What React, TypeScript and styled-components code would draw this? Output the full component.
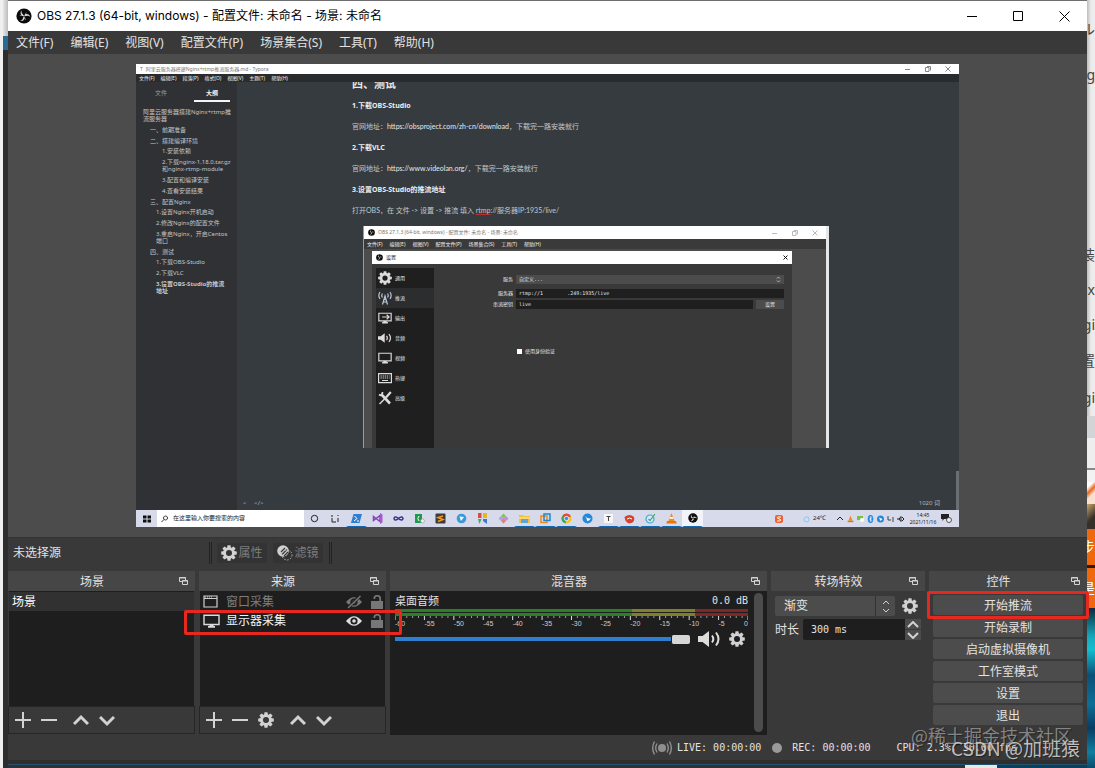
import React from 'react';
import styled, { createGlobalStyle, css } from 'styled-components';

const ui = `"Noto Sans", "Noto Sans CJK SC", sans-serif`;
const mono = `"DejaVu Sans Mono", "Noto Sans CJK SC", monospace`;

const c = {
  base: '#3a393a',
  panel: '#4c4c4c',
  head: '#464646',
  dark: '#1f1e1f',
  text: '#e2e2e2',
  dim: '#7d7d7d',
  icon: '#d2d2d2',
  red: '#e8281f',
};

const GlobalStyle = createGlobalStyle`
  *, *::before, *::after { box-sizing: border-box; }
  body { margin: 0; background: #2f2f2f; font-family: ${ui}; font-size: 12px; line-height: 16px; color: ${c.text}; }
  button, input, select { font: inherit; color: inherit; margin: 0; padding: 0; border: 0; background: none; border-radius: 0; outline: 0; }
  ul, h2, h3, p { margin: 0; padding: 0; list-style: none; font-weight: normal; font-size: inherit; }
  a { color: inherit; text-decoration: none; }
  svg { display: block; flex: none; }
`;

/* ---------- desktop behind the window ---------- */

const Desktop = styled.div`
  display: grid;
  grid-template-columns: 8px minmax(0, 1fr) 8px;
  grid-template-rows: minmax(0, 1fr) 4px;
  min-height: 100vh;
  overflow: hidden;
`;

const LeftEdge = styled.div`
  grid-area: 1 / 1 / 3 / 2;
  display: flex;
  flex-direction: column;
  border-left: 3px solid #f0f0f0;
  background: #2d2d2d;
  overflow: hidden;
`;

const Slice = styled.div<{ $h: number; $bg: string }>`
  flex: none;
  height: ${(p) => p.$h}px;
  background: ${(p) => p.$bg};
`;

const RightEdge = styled.div`
  grid-area: 1 / 3 / 3 / 4;
  display: flex;
  flex-direction: column;
  overflow: hidden;
`;

const Sea = styled.div`
  flex: 1;
  background: linear-gradient(#0a2a3e, #17a9bd 18%, #12bfd0 26%, #0b4f78 42%, #0d6f96 60%, #0a3c62 75%, #0e7fa0 90%, #0a4a6c);
`;

const EdgeText = styled.div<{ $h: number; $color?: string; $bg?: string }>`
  flex: none;
  display: flex;
  align-items: center;
  justify-content: flex-end;
  height: ${(p) => p.$h}px;
  overflow: hidden;
  font-size: 14px;
  white-space: nowrap;
  color: ${(p) => p.$color || '#444'};
  background: ${(p) => p.$bg || 'linear-gradient(90deg, #bdbdbd, #ececec 4px)'};
`;

const BottomEdge = styled.div`
  grid-area: 2 / 2;
  display: flex;
  background: #25303a;
  border-top: 1px solid #24536f;
  overflow: hidden;
`;

const BottomFill = styled.div<{ $bg: string; $w?: number }>`
  flex: ${(p) => (p.$w ? `0 0 ${p.$w}px` : '1')};
  background: ${(p) => p.$bg};
`;

/* ---------- window frame ---------- */

const Window = styled.main`
  grid-area: 1 / 2;
  display: flex;
  flex-direction: column;
  min-width: 0;
  background: ${c.base};
  border-top: 1px solid #6d6d6d;
  border-bottom: 4px solid #2f2f2f;
`;

const TitleBar = styled.header`
  display: flex;
  align-items: center;
  height: 30px;
  padding-left: 8px;
  gap: 5px;
  background: #fff;
  color: #000;
`;

const TitleText = styled.h1`
  flex: 1;
  margin: 0;
  font-family: Inter, "Noto Sans CJK SC", sans-serif;
  font-size: 12px;
  font-weight: 400;
  white-space: nowrap;
`;

const Caption = styled.div`
  display: flex;
  align-self: stretch;
`;

const CaptionButton = styled.button`
  display: flex;
  align-items: center;
  justify-content: center;
  width: 46px;
`;

const MenuBar = styled.nav`
  display: flex;
  align-items: center;
  gap: 1px;
  height: 23px;
  background: #393939;
`;

const MenuItem = styled.button`
  padding: 0 8px;
  white-space: nowrap;
`;

const Preview = styled.section`
  flex: 1;
  display: flex;
  align-items: center;
  justify-content: center;
  min-height: 483px;
  padding: 10px;
  background: ${c.panel};
`;

/* ---------- captured screen ---------- */

const Capture = styled.div`
  display: flex;
  flex-direction: column;
  width: 100%;
  max-width: 823px;
  height: 463px;
  background: #363b40;
  font-size: 6px;
  line-height: 7px;
  overflow: hidden;
  white-space: nowrap;
`;

const TinyTitle = styled.div<{ $h: number; $strong?: boolean }>`
  flex: none;
  display: flex;
  align-items: center;
  gap: 3px;
  height: ${(p) => p.$h}px;
  padding: 0 4px;
  background: #fff;
  font-size: 5px;
  color: ${(p) => (p.$strong ? '#111' : '#777')};
`;

const TinyGrow = styled.span`
  flex: 1;
`;

const TinyCaption = styled.div`
  display: flex;
  gap: 14px;
  padding-right: 4px;
`;

const TinyMenu = styled.div<{ $h: number; $bg: string; $gap: number }>`
  flex: none;
  display: flex;
  align-items: center;
  gap: ${(p) => p.$gap}px;
  height: ${(p) => p.$h}px;
  padding: 0 3px;
  background: ${(p) => p.$bg};
  font-size: 5px;
  color: #f0f0f0;
`;

const Typora = styled.div`
  flex: 1;
  display: flex;
  min-height: 0;
`;

const Outline = styled.aside`
  flex: none;
  width: 101px;
  padding: 0 7px;
  background: #2f3134;
  color: #c4c6c8;
`;

const OutlineTabs = styled.div`
  display: flex;
  justify-content: space-between;
  height: 20px;
  margin-bottom: 7px;
`;

const OutlineTab = styled.div<{ $on?: boolean }>`
  display: flex;
  align-items: center;
  justify-content: center;
  width: 36px;
  padding-top: 4px;
  border-bottom: 2px solid ${(p) => (p.$on ? '#f4f4f4' : 'transparent')};
  font-weight: ${(p) => (p.$on ? 700 : 400)};
  color: ${(p) => (p.$on ? '#f4f4f4' : '#9a9c9e')};
`;

const OutlineList = styled.ul`
  display: flex;
  flex-direction: column;
  gap: 4px;
`;

const OutlineSub = styled(OutlineList)<{ $indent: number }>`
  margin-top: 3px;
  padding-left: ${(p) => p.$indent}px;
`;

const OutlineSection = styled.li`
  padding-left: 7px;
`;

const OutlineRoot = styled.li``;

const OutlineLeaf = styled.li<{ $bold?: boolean }>`
  font-weight: ${(p) => (p.$bold ? 700 : 400)};
`;

const Editor = styled.div`
  flex: 1;
  display: flex;
  flex-direction: column;
  min-width: 0;
`;

const Article = styled.article`
  flex: 1;
  padding: 0 130px 0 115px;
  font-family: Lato, "Noto Sans CJK SC", sans-serif;
  font-size: 7px;
  line-height: 21px;
  color: #c3c8cc;
  overflow: hidden;
`;

const ArticleHead = styled.h2`
  height: 13px;
  font-size: 11px;
  font-weight: 700;
  line-height: 4px;
  color: #e6e6e6;
`;

const ArticleSub = styled.h3`
  font-family: ${ui};
  font-size: 7px;
  font-weight: 700;
  color: #eee;
`;

const ArticleLink = styled.a`
  color: #e6e8ea;
`;

const Squiggle = styled.span`
  text-decoration: underline 1px #b33;
`;

const EditorFoot = styled.div`
  flex: none;
  display: flex;
  align-items: center;
  justify-content: space-between;
  height: 14px;
  padding: 0 16px 0 6px;
  color: #b3b6b9;
`;

const EditorScroll = styled.div`
  flex: none;
  align-self: flex-end;
  width: 3px;
  height: 39px;
  background: #6a6e72;
`;

/* OBS window inside the article */

const Shot = styled.div`
  display: flex;
  width: 466px;
  height: 222px;
  margin: 5px 0 0 11px;
  font-family: ${ui};
  font-size: 5px;
  line-height: 7px;
  color: #e6e6e6;
  border-right: 3px solid #e4e6e8;
  border-left: 1px solid #9a9a9a;
`;

const ShotWindow = styled.div`
  flex: 1;
  display: flex;
  flex-direction: column;
  background: ${c.panel};
`;

const Dialog = styled.div`
  flex: 1;
  display: flex;
  flex-direction: column;
  margin: 2px 34px 0 8px;
  background: #393939;
`;

const DialogBody = styled.div`
  flex: 1;
  display: flex;
  padding: 4px 8px 0 4px;
`;

const SettingsNav = styled.ul`
  width: 58px;
  background: #1f1f1f;
`;

const SettingsItem = styled.li<{ $on?: boolean }>`
  display: flex;
  align-items: center;
  gap: 3px;
  height: 20px;
  padding-left: 2px;
  background: ${(p) => (p.$on ? '#2c2d2f' : 'transparent')};
`;

const SettingsForm = styled.div`
  flex: 1;
  display: flex;
  flex-direction: column;
  gap: 2px;
  padding-top: 7px;
`;

const FormLine = styled.div`
  display: grid;
  grid-template-columns: 79px minmax(0, 1fr) auto;
  align-items: center;
  column-gap: 3px;
`;

const FormGap = styled.div`
  height: 1px;
`;

const FormLabel = styled.span`
  text-align: right;
`;

const FormField = styled.span<{ $bg: string; $wide?: boolean }>`
  grid-column: ${(p) => (p.$wide ? '2 / 4' : '2')};
  display: flex;
  align-items: center;
  justify-content: space-between;
  height: 9px;
  padding: 0 3px;
  background: ${(p) => p.$bg};
  font-family: ${mono};
  font-size: 5px;
  white-space: pre;
`;

const FormKey = styled.span`
  display: flex;
  align-items: center;
  justify-content: center;
  width: 28px;
  height: 9px;
  background: ${c.panel};
`;

const FormCheck = styled.span`
  display: flex;
  align-items: center;
  gap: 3px;
  margin: 37px 0 0 83px;
`;

const CheckBox = styled.span`
  width: 5px;
  height: 5px;
  background: #fff;
`;

/* Windows taskbar */

const Taskbar = styled.div`
  flex: none;
  display: flex;
  align-items: center;
  height: 17px;
  background: #d6daea;
  color: #1a1a1a;
`;

const StartSlot = styled.span`
  display: flex;
  justify-content: center;
  width: 21px;
`;

const SearchSlot = styled.span`
  display: flex;
  align-items: center;
  gap: 4px;
  width: 147px;
  height: 17px;
  padding-left: 4px;
  background: #fff;
`;

const TaskSlot = styled.span<{ $open?: boolean; $active?: boolean }>`
  display: flex;
  align-items: center;
  justify-content: center;
  width: 21px;
  height: 17px;
  border: solid transparent;
  border-width: 0 2px 1px;
  background: ${(p) => (p.$active ? '#f2f4fa' : 'transparent')};
  border-bottom-color: ${(p) => (p.$open ? '#1466ad' : 'transparent')};
`;

const Tray = styled.span`
  display: flex;
  align-items: center;
  gap: 3px;
  margin-left: auto;
  padding-right: 7px;
`;

const TrayGap = styled.span`
  width: 13px;
`;

const Temperature = styled.span`
  width: 20px;
`;

const Clock = styled.span`
  width: 30px;
  font-size: 5px;
  text-align: center;
  white-space: normal;
`;

/* ---------- context bar ---------- */

const ContextBar = styled.section`
  display: flex;
  align-items: center;
  height: 34px;
  padding: 0 5px 4px;
  border-top: 1px solid #343434;
`;

const ContextLabel = styled.span`
  width: 196px;
`;

const Grip = styled.span`
  width: 3px;
  height: 22px;
  border: solid #222;
  border-width: 0 1px;
`;

const ContextButtons = styled.div`
  display: flex;
  gap: 6px;
  padding: 0 6px 0 5px;
`;

const ContextButton = styled.button`
  display: flex;
  align-items: center;
  justify-content: center;
  gap: 1px;
  width: 50px;
  height: 20px;
  border-radius: 3px;
  background: #333;
  color: ${c.dim};
`;

/* ---------- docks ---------- */

const Docks = styled.div`
  display: grid;
  grid-template-columns: 187fr 187fr 377fr 154fr 158fr;
  gap: 4px;
`;

const Dock = styled.section`
  display: flex;
  flex-direction: column;
  min-width: 0;
  height: 164px;
`;

const DockHead = styled.header`
  flex: none;
  display: flex;
  align-items: center;
  height: 20px;
  padding-right: 7px;
  background: ${c.head};
`;

const DockTitle = styled.h2`
  flex: 1;
  padding: 1px 3px 0 0;
  text-align: center;
`;

const IconButton = styled.button`
  display: flex;
  align-items: center;
  justify-content: center;
`;

const SideButton = styled(IconButton)`
  width: 22px;
`;

const List = styled.ul`
  flex: 1;
  margin: 0 1px;
  padding-top: 1px;
  background: ${c.dark};
`;

const SceneItem = styled.li`
  height: 19px;
  padding: 2px 3px 0;
  background: #313131;
  color: #fff;
`;

const SourceItem = styled.li<{ $off?: boolean; $marked?: boolean }>`
  position: relative;
  display: flex;
  align-items: center;
  height: 19px;
  padding: 0 2px 0 3px;
  gap: 6px;
  color: ${(p) => (p.$off ? c.dim : '#f4f4f4')};
  ${(p) =>
    p.$marked &&
    css`
      &::after {
        content: '';
        position: absolute;
        z-index: 2;
        inset: -1px -17px -5px -16px;
        border: 3px solid ${c.red};
        border-radius: 2px;
      }
    `}
`;

const SourceName = styled.span`
  flex: 1;
`;

const SourceToggles = styled.span`
  display: flex;
  gap: 9px;
`;

const DockTools = styled.div`
  flex: none;
  display: flex;
  align-items: center;
  gap: 10px;
  height: 28px;
  margin-bottom: 1px;
  padding: 0 6px;
  border: 1px solid #262626;
`;

const Mixer = styled.div`
  flex: 1;
  display: flex;
  gap: 6px;
  padding: 2px 4px 3px 5px;
  background: ${c.dark};
`;

const Channel = styled.div`
  flex: 1;
  min-width: 0;
`;

const ChannelHead = styled.div`
  display: flex;
  align-items: center;
  justify-content: space-between;
  height: 16px;
  font-size: 11px;
`;

const Decibel = styled.output`
  font-family: ${mono};
  font-size: 10px;
`;

const Meter = styled.div`
  display: flex;
  flex-direction: column;
  gap: 1px;
`;

const MeterBar = styled.div`
  height: 3px;
  background: linear-gradient(90deg, #2c7f29 67%, #7f7f2c 67% 85%, #7f2626 85%);
`;

const MeterLabels = styled.div`
  display: flex;
  justify-content: space-between;
  font-family: "Liberation Sans", sans-serif;
  font-size: 7px;
  line-height: 8px;
  color: #ccc;
`;

const VolumeRow = styled.div`
  display: flex;
  align-items: center;
  gap: 8px;
  margin-top: 3px;
  padding-right: 3px;
`;

const VolumeSlider = styled.input`
  flex: 1;
  min-width: 0;
  height: 16px;
  appearance: none;
  background: linear-gradient(#2f7fd0, #2f7fd0) center / 100% 4px no-repeat;
  &::-webkit-slider-thumb {
    appearance: none;
    width: 19px;
    height: 9px;
    border-radius: 2px;
    border-left: 1px solid ${c.dark};
    background: #d6d6d6;
  }
`;

const ScrollThumb = styled.div`
  width: 9px;
  border-radius: 5px;
  background: ${c.panel};
`;

const Transitions = styled.div`
  display: flex;
  flex-direction: column;
  gap: 3px;
  padding: 5px 4px;
`;

const FieldRow = styled.div`
  display: flex;
  align-items: center;
  gap: 4px;
  white-space: nowrap;
`;

const SelectWrap = styled.div`
  flex: 1;
  display: grid;
  grid-template-columns: minmax(0, 1fr) 20px;
  align-items: center;
  min-width: 0;
  height: 20px;
  background: ${c.panel};
  border-radius: 2px;
`;

const Select = styled.select`
  grid-area: 1 / 1 / 2 / 3;
  height: 20px;
  padding-left: 9px;
  appearance: none;
`;

const SelectArrows = styled.span`
  grid-area: 1 / 2;
  display: flex;
  align-items: center;
  justify-content: center;
  height: 20px;
  border-left: 1px solid #333;
  pointer-events: none;
`;

const Spin = styled.div`
  flex: 1;
  display: flex;
  min-width: 0;
  height: 21px;
`;

const SpinInput = styled.input`
  flex: 1;
  width: 100%;
  min-width: 0;
  padding-left: 8px;
  border-radius: 2px 0 0 2px;
  background: ${c.dark};
  font-family: ${mono};
  font-size: 10px;
`;

const SpinButtons = styled.div`
  flex: none;
  display: flex;
  flex-direction: column;
  gap: 1px;
  width: 16px;
`;

const SpinButton = styled.button`
  flex: 1;
  display: flex;
  align-items: center;
  justify-content: center;
  background: ${c.panel};
`;

const Controls = styled.div`
  display: flex;
  flex-direction: column;
  gap: 2px;
  padding: 4px 4px 0;
`;

const ControlButton = styled.button<{ $marked?: boolean }>`
  position: relative;
  height: 20px;
  padding-top: 2px;
  border-radius: 2px;
  background: ${c.panel};
  ${(p) =>
    p.$marked &&
    css`
      &::after {
        content: '';
        position: absolute;
        z-index: 2;
        inset: -4px -6px;
        border: 3px solid ${c.red};
        border-radius: 2px;
      }
    `}
`;

/* ---------- status bar ---------- */

const StatusBar = styled.footer`
  position: relative;
  display: flex;
  align-items: center;
  justify-content: flex-end;
  height: 25px;
  padding: 1px 70px 0 0;
  font-family: ${mono};
  font-size: 10px;
  white-space: nowrap;
`;

const StatusItem = styled.span<{ $gap: number; $end: number }>`
  display: flex;
  align-items: center;
  gap: ${(p) => p.$gap}px;
  margin-right: ${(p) => p.$end}px;
`;

const RecDot = styled.span`
  width: 10px;
  height: 10px;
  border-radius: 5px;
  background: #9a9a9a;
`;

const Watermark = styled.span<{ $right: number; $bottom: number; $size: number; $color: string }>`
  position: absolute;
  right: ${(p) => p.$right}px;
  bottom: ${(p) => p.$bottom}px;
  font-family: "Noto Sans CJK SC", sans-serif;
  font-size: ${(p) => p.$size}px;
  line-height: 20px;
  color: ${(p) => p.$color};
  text-shadow: 1px 1px 1px rgba(0, 0, 0, 0.4);
  pointer-events: none;
`;

/* ---------- icons ---------- */

const Gear = ({ size = 16, color = c.icon }: { size?: number; color?: string }) => (
  <svg width={size} height={size} viewBox="0 0 16 16" fill={color}>
    {[0, 45, 90, 135, 180, 225, 270, 315].map((a) => (
      <path key={a} d="M6 3.400 6.500 .2h3l.5 3.200z" transform={`rotate(${a} 8 8)`} />
    ))}
    <circle cx="8" cy="8" r="4.400" fill="none" stroke={color} strokeWidth="2.800" />
  </svg>
);

const Stroke = ({ d, w = 16, h = 16, color = c.icon, sw = 2 }: { d: string; w?: number; h?: number; color?: string; sw?: number }) => (
  <svg width={w} height={h} viewBox={`0 0 ${w} ${h}`} fill="none" stroke={color} strokeWidth={sw}>
    <path d={d} />
  </svg>
);

const ObsLogo = ({ size }: { size: number }) => (
  <svg width={size} height={size} viewBox="0 0 16 16">
    <circle cx="8" cy="8" r="7.6" fill="#0c0c0c" />
    {[0, 120, 240].map((a) => (
      <path
        key={a}
        d="M8.2 7.4C6.4 6.2 5 4.6 5.6 2.2 4.2 3.6 4.1 6.3 6 7.7c-.9-.3-1.6-.4-2.6 0 1.8.2 3.4.8 4.8-.3z"
        fill="#d9d9d9"
        transform={`rotate(${a} 8 8)`}
      />
    ))}
  </svg>
);

const Float = () => (
  <svg width="9" height="8" viewBox="0 0 9 8" fill="none" stroke={c.icon}>
    <path d="M6.500 3V.5h-6v4H3M0 1h7" />
    <path d="M3.500 3.5h5v4h-5zM3 4h6" />
  </svg>
);

const Eye = ({ off }: { off?: boolean }) => (
  <svg width="16" height="14" viewBox="0 0 16 14">
    <path d="M0 7Q8-2.5 16 7 8 16.5 0 7z" fill={off ? '#777' : '#dedede'} />
    <circle cx="8" cy="7" r="3.6" fill={c.dark} />
    <circle cx="8" cy="7" r="1.8" fill={off ? '#777' : '#dedede'} />
    {off && <path d="M1 13.5 14.5.5" stroke={c.dark} strokeWidth="3" />}
    {off && <path d="M2 13 14.5 1" stroke="#777" strokeWidth="1.5" />}
  </svg>
);

const Lock = () => (
  <svg width="12" height="14" viewBox="0 0 12 14">
    <path d="M0 6h12v8H0z" fill="#777" />
    <path d="M3.300 4V3.700a2.900 2.900 0 0 1 5.900 0V7" fill="none" stroke="#777" strokeWidth="1.7" />
  </svg>
);

const Monitor = ({ w = 17, h = 14, arrow }: { w?: number; h?: number; arrow?: boolean }) => (
  <svg width={w} height={h} viewBox="0 0 17 14" fill="none" stroke="#dcdcdc" strokeWidth="1.4">
    <path d="M1 1.2h15v9.3H1z" />
    <path d="M5 12.8h7M6.5 11.6h4" strokeWidth="1.8" />
    {arrow && <path d="M5 5.8h8M10.5 3l3 2.8-3 2.8" />}
  </svg>
);

const WindowIcon = () => (
  <svg width="17" height="13" viewBox="0 0 17 13" fill="none" stroke="#cfcfcf">
    <path d="M1 1h13v11H1z" strokeWidth="1.2" />
    <path d="M1 3.5h13" />
    <path d="M2 2h8" strokeDasharray="1 1" />
  </svg>
);

const Speaker = ({ w = 23, h = 16 }: { w?: number; h?: number }) => (
  <svg width={w} height={h} viewBox="0 0 23 16">
    <path d="M0 5h4.5L11 0v16l-6.5-5H0z" fill="#dcdcdc" />
    <path d="M14 4.5q2.6 3.5 0 7M18 1.5q5 6.500 0 13" fill="none" stroke="#dcdcdc" strokeWidth="2" />
  </svg>
);

const Filters = () => (
  <svg width="16" height="16" viewBox="0 0 16 16">
    <circle cx="6" cy="6" r="5.8" fill="#cfcfcf" />
    <path d="m4 7 4-4M5 9.500l5-5M7 11l4-4" stroke="#333" strokeWidth="1.1" />
    <circle cx="10" cy="10" r="5" fill="none" stroke="#b5b5b5" strokeDasharray="1.500 1.500" />
  </svg>
);

const Broadcast = () => (
  <svg width="20" height="14" viewBox="0 0 20 14" fill="none" stroke="#8f8f8f" strokeWidth="1.4">
    <circle cx="10" cy="7" r="4" fill="#8f8f8f" stroke="none" />
    <path d="M5 2.500q-2.600 4.500 0 9M15 2.500q2.600 4.500 0 9M2.500.5q-3.600 6.500 0 13M17.500.5q3.600 6.500 0 13" />
  </svg>
);

const Antenna = () => (
  <svg width="14" height="14" viewBox="0 0 14 14" fill="none" stroke="#b9c9da" strokeWidth="1.2">
    <path d="M4.500 13.500 7 5l2.500 8.500M5.200 11h3.600M6 8.500h2M4.500 2.500q-1.500 2 0 4M9.500 2.500q1.500 2 0 4M2 1Q-.3 4.500 2 8M12 1q2.300 3.500 0 7" />
  </svg>
);

const Keyboard = () => (
  <svg width="14" height="12" viewBox="0 0 14 12" fill="none" stroke="#dcdcdc">
    <path d="M.6 1.600h12.800v9H.6z" strokeWidth="1.200" />
    <path d="M2.500 4h9M2.500 6h9" strokeDasharray="1.300 .8" strokeWidth="1.200" />
    <path d="M4 8.500h6" />
  </svg>
);

const Tools = () => (
  <svg width="14" height="14" viewBox="0 0 14 14" fill="none" stroke="#dcdcdc">
    <path d="m3 3 9 9.500" strokeWidth="2.600" />
    <path d="M1 3.500Q4.500 6 4.500 1" strokeWidth="1.700" />
    <path d="M12.800 1 8 6.500" strokeWidth="2.200" />
    <path d="M6.500 8 1.500 13" strokeWidth="1.500" />
  </svg>
);

const App10 = ({ children }: { children: React.ReactNode }) => (
  <svg width="11" height="11" viewBox="0 0 11 11" fill="none">
    {children}
  </svg>
);

const Cone = () => (
  <App10>
    <path d="m5.500 0 3 8h-6z" fill="#f08a1c" />
    <path d="M4 4h3l.6 1.700H3.400z" fill="#fff" />
    <path d="M1 8h9l.6 2.500H.4z" fill="#e87410" />
  </App10>
);

const Bird = () => (
  <App10>
    <circle cx="5.500" cy="5.500" r="5" fill="#2389dd" />
    <path d="M3 3q2 3 6 2.500Q7 8 5 8 5 5.500 3 3z" fill="#fff" />
  </App10>
);

/* ---------- data ---------- */

const menus = ['文件(F)', '编辑(E)', '视图(V)', '配置文件(P)', '场景集合(S)', '工具(T)', '帮助(H)'];
const typoraMenus = ['文件(F)', '编辑(E)', '段落(P)', '格式(O)', '视图(V)', '主题(T)', '帮助(H)'];
const controls = ['开始推流', '开始录制', '启动虚拟摄像机', '工作室模式', '设置', '退出'];
const levels = [-60, -55, -50, -45, -40, -35, -30, -25, -20, -15, -10, -5, 0];
const ticks = Array.from({ length: 61 }, (_, i) => i);

const outline = [
  { title: '一、前期准备', indent: 0, items: [] },
  { title: '二、搭建编译环境', indent: 12, items: [['1.安装依赖'], ['2.下载nginx-1.18.0.tar.gz', '和nginx-rtmp-module'], ['3.配置和编译安装'], ['4.查看安装结果']] },
  { title: '三、配置Nginx', indent: 6, items: [['1.设置Nginx开机启动'], ['2.修改Nginx的配置文件'], ['3.重启Nginx，开启Centos', '端口']] },
  { title: '四、测试', indent: 6, items: [['1.下载OBS-Studio'], ['2.下载VLC'], ['3.设置OBS-Studio的推流', '地址']] },
];

const settings: [React.ReactNode, string][] = [
  [<Gear size={14} color="#dcdcdc" />, '通用'],
  [<Antenna />, '推流'],
  [<Monitor w={14} h={12} arrow />, '输出'],
  [<Speaker w={14} h={10} />, '音频'],
  [<Monitor w={14} h={12} />, '视频'],
  [<Keyboard />, '热键'],
  [<Tools />, '高级'],
];

const tasks: { icon: React.ReactNode; open?: boolean; active?: boolean }[] = [
  { icon: <App10><circle cx="5.500" cy="5.500" r="3.200" stroke="#222" /></App10> },
  { icon: <App10><path d="M2 2v2M2 5v4h4M8 5v4M8 2v1" stroke="#222" /></App10> },
  { icon: <App10><path d="M2.500 1H11L8.500 10H0z" fill="#2f7fd0" /><path d="m3.500 3 2.500 2.500L3 8M6 8h2" stroke="#fff" /></App10>, open: true },
  { icon: <App10><path d="m1.500 3.500 6.500 5V2.500l-6.500 5z" stroke="#8a3fb8" strokeWidth="1.500" /><path d="m8 0 2.500 1.500v8L8 11z" fill="#a45bd0" /></App10> },
  { icon: <App10><path d="M5.500 5.500q-2-2-3.500-1.500-2 1.500 0 3 1.500.5 3.500-1.500T9 4q2 1.500 0 3-1.500.5-3.500-1.500z" stroke="#33338c" strokeWidth="1.500" /></App10> },
  { icon: <App10><path d="M1 1h7v9H1z" fill="#1d9a4a" /><path d="M5 3q-2.500 2.500 0 5" stroke="#fff" /><circle cx="8.500" cy="8" r="2" fill="#eee" stroke="#888" strokeWidth=".5" /></App10> },
  { icon: <App10><rect x=".5" y=".5" width="10" height="10" rx="1" fill="#3c3c3c" /><path d="M8 3 3 4.500l5 2L3 8.500" stroke="#f69a1e" strokeWidth="1.500" /></App10> },
  { icon: <App10><circle cx="5.500" cy="5.500" r="4.800" fill="#3a9ad8" /><path d="m3.500 3.500 4.500.5-3 4z" fill="#fff" /></App10> },
  { icon: <App10><path d="M1 0h3.500v5H1z" fill="#e04a3a" /><path d="M6 0h4v5H6z" fill="#f2b21c" /><path d="M1 6h3.500l-2 5z" fill="#46a84a" /><path d="M6 6h4v5L6 8z" fill="#3a78d8" /></App10> },
  { icon: <App10><path d="m5.500.5 2.500 2.500-2.500 2.500L3 3z" fill="#8bc34a" /><path d="m3 3 2.500 2.500L3 8 .5 5.500z" fill="#a8a8d8" /><path d="m8 3 2.500 2.500L8 8 5.500 5.500z" fill="#c58adb" /><path d="M5.500 5.500 8 8l-2.500 2.500L3 8z" fill="#e87a7a" /></App10> },
  { icon: <App10><path d="M0 2h4l1 1h6v7H0z" fill="#f4bf3c" /><path d="M2 6h7v4H2z" fill="#5aa7e0" /><path d="M0 4h11v2H0z" fill="#fbd66a" /></App10>, open: true },
  { icon: <App10><path d="M1 3h6v6.500H1z" stroke="#f08a1c" strokeWidth="1.500" /><path d="M4 1h6v6.500H4z" stroke="#1e88c9" strokeWidth="1.500" /></App10>, open: true },
  { icon: <App10><circle cx="5.500" cy="5.500" r="5" fill="#f2c61c" /><path d="M5.500 5.500 1 3.200a5 5 0 0 1 9 0z" fill="#dd4b3a" /><path d="M5.500 5.500 1 3.200a5 5 0 0 0 3.500 7.200z" fill="#3aa757" /><circle cx="5.500" cy="5.500" r="2.200" fill="#4285f4" stroke="#fff" strokeWidth=".8" /></App10>, open: true },
  { icon: <Bird /> },
  { icon: <App10><path d="M1 1h9v9H1z" fill="#f6f6f6" /><path d="M3.500 3.500h4M5.500 3.500v4.500" stroke="#444" /></App10>, open: true },
  { icon: <App10><path d="M.5 4q5-4 9.500 0 1.500 6-5 6.500Q1 9 .5 4z" fill="#d9402c" /><path d="M3 6q2.500-2 5 0" stroke="#fff" /></App10>, open: true },
  { icon: <App10><circle cx="5" cy="6" r="4" fill="#cfe9f8" stroke="#4aa3d8" strokeWidth="1.200" /><path d="m3.500 6 1.500 1.500L10 1" stroke="#3fae5a" strokeWidth="1.200" /></App10>, open: true },
  { icon: <Cone />, open: true },
  { icon: <ObsLogo size={10} />, open: true, active: true },
];

/* ---------- parts ---------- */

const TinyButtons = ({ color }: { color: string }) => (
  <TinyCaption>
    <Stroke d="M0 3.500h5" w={6} h={6} sw={1} color={color} />
    <Stroke d="M.5 1.500h3.500v4H.5zM2 .5h3.500v4" w={6} h={6} sw={1} color={color} />
    <Stroke d="m.5.5 5 5m0-5-5 5" w={6} h={6} sw={1} color={color} />
  </TinyCaption>
);

function SettingsShot() {
  return (
    <Shot>
      <ShotWindow>
        <TinyTitle $h={13}>
          <ObsLogo size={7} />
          <TinyGrow>OBS 27.1.3 (64-bit, windows) - 配置文件: 未命名 - 场景: 未命名</TinyGrow>
          <TinyButtons color="#bbb" />
        </TinyTitle>
        <TinyMenu $h={10} $bg="#3a3a3a" $gap={7}>
          {menus.map((m) => <span key={m}>{m}</span>)}
        </TinyMenu>
        <Dialog>
          <TinyTitle $h={13} $strong>
            <ObsLogo size={7} />
            <TinyGrow>设置</TinyGrow>
            <Stroke d="m.5.5 4 4m0-4-4 4" w={5} h={5} sw={1} color="#111" />
          </TinyTitle>
          <DialogBody>
            <SettingsNav>
              {settings.map(([icon, name], i) => (
                <SettingsItem key={name} $on={i === 1}>{icon}{name}</SettingsItem>
              ))}
            </SettingsNav>
            <SettingsForm>
              <FormLine>
                <FormLabel>服务</FormLabel>
                <FormField $bg={c.panel} $wide>自定义...<Stroke d="m1 2.500 1.500-1.500L4 2.500m-3 2L2.500 6 4 4.500" w={5} h={7} sw={1} color="#bbb" /></FormField>
              </FormLine>
              <FormGap />
              <FormLine>
                <FormLabel>服务器</FormLabel>
                <FormField $bg="#1f1f1f" $wide>{'rtmp://1        .249:1935/live'}</FormField>
              </FormLine>
              <FormLine>
                <FormLabel>串流密钥</FormLabel>
                <FormField $bg="#1f1f1f">live</FormField>
                <FormKey>设置</FormKey>
              </FormLine>
              <FormCheck><CheckBox />使用身份验证</FormCheck>
            </SettingsForm>
          </DialogBody>
        </Dialog>
      </ShotWindow>
    </Shot>
  );
}

function CapturedScreen() {
  return (
    <Capture>
      <TinyTitle $h={10}>
        <span>T</span>
        <TinyGrow>阿里云服务器搭建Nginx+rtmp推流服务器.md - Typora</TinyGrow>
        <TinyButtons color="#888" />
      </TinyTitle>
      <TinyMenu $h={8} $bg="#2a2b2c" $gap={6}>
        {typoraMenus.map((m) => <span key={m}>{m}</span>)}
      </TinyMenu>
      <Typora>
        <Outline>
          <OutlineTabs>
            <OutlineTab>文件</OutlineTab>
            <OutlineTab $on>大纲</OutlineTab>
          </OutlineTabs>
          <OutlineList>
            <OutlineRoot>阿里云服务器搭建Nginx+rtmp推<br />流服务器</OutlineRoot>
            {outline.map((s, n) => (
              <OutlineSection key={s.title}>
                {s.title}
                {s.items.length > 0 && (
                  <OutlineSub $indent={s.indent}>
                    {s.items.map((lines, i) => (
                      <OutlineLeaf key={lines[0]} $bold={n === 3 && i === 2}>
                        {lines[0]}
                        {lines[1] && <><br />{lines[1]}</>}
                      </OutlineLeaf>
                    ))}
                  </OutlineSub>
                )}
              </OutlineSection>
            ))}
          </OutlineList>
        </Outline>
        <Editor>
          <Article>
            <ArticleHead>四、测试</ArticleHead>
            <ArticleSub>1.下载OBS-Studio</ArticleSub>
            <p>官网地址：<ArticleLink href="#obs">https://obsproject.com/zh-cn/download</ArticleLink>，下载完一路安装就行</p>
            <ArticleSub>2.下载VLC</ArticleSub>
            <p>官网地址：<ArticleLink href="#vlc">https://www.videolan.org/</ArticleLink>，下载完一路安装就行</p>
            <ArticleSub>3.设置OBS-Studio的推流地址</ArticleSub>
            <p>打开OBS，在 文件 -&gt; 设置 -&gt; 推流 填入 <Squiggle>rtmp</Squiggle>://服务器IP:1935/live/</p>
            <SettingsShot />
          </Article>
          <EditorFoot><span>&lt;&nbsp;&nbsp;&nbsp;&nbsp;&nbsp;&lt;/&gt;</span><span>1020 词</span></EditorFoot>
        </Editor>
        <EditorScroll />
      </Typora>
      <Taskbar>
        <StartSlot>
          <Stroke d="M0 2h3.500M4.500 2H8M0 6h3.500M4.500 6H8" w={8} h={8} sw={3} color="#111" />
        </StartSlot>
        <SearchSlot>
          <Stroke d="M4.500 1a2 2 0 1 0 .01 0M3 4.500.5 7" w={8} h={8} sw={1} color="#333" />
          在这里输入你要搜索的内容
        </SearchSlot>
        {tasks.map((t, i) => <TaskSlot key={i} $open={t.open} $active={t.active}>{t.icon}</TaskSlot>)}
        <Tray>
          <svg width="8" height="8" viewBox="0 0 8 8">
            <rect width="8" height="8" rx="2" fill="#f0602c" />
            <path d="M6 2H3.500q-1.500 0-1 1.200L5.500 4.500Q6 6 4.500 6H2" fill="none" stroke="#fff" />
          </svg>
          <TrayGap />
          <Stroke d="M2 6q-1-3 2-4t3 2-2 3z" w={8} h={8} sw={1} color="#8ec8ea" />
          <Temperature>24℃</Temperature>
          <Stroke d="m1 5 3-3 3 3" w={8} h={7} sw={1} color="#222" />
          <svg width="7" height="8" viewBox="0 0 11 11"><path d="m5.500 0 3 8h-6z" fill="#f08a1c" /><path d="M1 8h9v2.500H1z" fill="#e87410" /></svg>
          <svg width="7" height="8" viewBox="0 0 7 8"><path d="M0 1h6v4H0z" fill="#7cc142" /><circle cx="5" cy="5" r="2" fill="#fff" /></svg>
          <svg width="7" height="8" viewBox="0 0 7 8"><ellipse cx="3.500" cy="4" rx="2.800" ry="4" fill="#1f86e0" /><path d="m2 2.500 3 3-1.500 1V1.500l1.500 1-3 3" fill="none" stroke="#fff" strokeWidth=".6" /></svg>
          <svg width="7" height="8" viewBox="0 0 7 8"><circle cx="3.500" cy="4" r="3.500" fill="#2389dd" /><path d="m2 2.500 3.500 1.500L3.500 6z" fill="#fff" /></svg>
          <Stroke d="M1 1v4h3M6 2v5" w={7} h={8} sw={1} color="#444" />
          <Stroke d="M0 4h2l2-2.500v5L2 4M5 2l2 2-2 2" w={8} h={8} sw={1} color="#222" />
          <Clock>14:45 2021/11/16</Clock>
          <svg width="11" height="9" viewBox="0 0 11 9">
            <path d="M0 0h8v5H3L1.500 7V5H0z" fill="#222" />
            <circle cx="8" cy="6" r="2.500" fill="#eee" stroke="#333" strokeWidth=".8" />
          </svg>
        </Tray>
      </Taskbar>
    </Capture>
  );
}

function DockPanel({ title, children }: { title: string; children: React.ReactNode }) {
  return (
    <Dock>
      <DockHead>
        <DockTitle>{title}</DockTitle>
        <IconButton aria-label={`浮动 ${title}`}><Float /></IconButton>
      </DockHead>
      {children}
    </Dock>
  );
}

const Plus = () => <IconButton aria-label="添加"><Stroke d="M8 0v16M0 8h16" /></IconButton>;
const Minus = () => <IconButton aria-label="移除"><Stroke d="M0 8h16" /></IconButton>;
const Up = () => <IconButton aria-label="上移"><Stroke d="m1 12 7-7 7 7" sw={3} /></IconButton>;
const Down = () => <IconButton aria-label="下移"><Stroke d="m1 5 7 7 7-7" sw={3} /></IconButton>;

const ArrowPair = styled.div`
  display: flex;
  gap: 10px;
  margin-left: 6px;
`;

export default function App() {
  return (
    <>
      <GlobalStyle />
      <Desktop>
        <LeftEdge>
          <Slice $h={36} $bg="linear-gradient(90deg, #e6e6e6, #bcbcbc)" />
          <Slice $h={14} $bg="#2a6a94" />
        </LeftEdge>
        <Window>
          <TitleBar>
            <ObsLogo size={16} />
            <TitleText>OBS 27.1.3 (64-bit, windows) - 配置文件: 未命名 - 场景: 未命名</TitleText>
            <Caption>
              <CaptionButton aria-label="最小化"><Stroke d="M0 5.500h10" w={10} h={11} sw={1} color="#000" /></CaptionButton>
              <CaptionButton aria-label="最大化"><Stroke d="M.5.5h9v9h-9z" w={10} h={10} sw={1} color="#000" /></CaptionButton>
              <CaptionButton aria-label="关闭"><Stroke d="m.5.5 10 10m0-10-10 10" w={11} h={11} sw={1} color="#000" /></CaptionButton>
            </Caption>
          </TitleBar>
          <MenuBar>
            {menus.map((m) => <MenuItem key={m}>{m}</MenuItem>)}
          </MenuBar>
          <Preview><CapturedScreen /></Preview>
          <ContextBar>
            <ContextLabel>未选择源</ContextLabel>
            <Grip />
            <ContextButtons>
              <ContextButton><Gear />属性</ContextButton>
              <ContextButton><Filters />滤镜</ContextButton>
            </ContextButtons>
            <Grip />
          </ContextBar>
          <Docks>
            <DockPanel title="场景">
              <List><SceneItem>场景</SceneItem></List>
              <DockTools><Plus /><Minus /><ArrowPair><Up /><Down /></ArrowPair></DockTools>
            </DockPanel>
            <DockPanel title="来源">
              <List>
                <SourceItem $off><WindowIcon /><SourceName>窗口采集</SourceName><SourceToggles><Eye off /><Lock /></SourceToggles></SourceItem>
                <SourceItem $marked><Monitor /><SourceName>显示器采集</SourceName><SourceToggles><Eye /><Lock /></SourceToggles></SourceItem>
              </List>
              <DockTools>
                <Plus /><Minus />
                <IconButton aria-label="属性"><Gear /></IconButton>
                <ArrowPair><Up /><Down /></ArrowPair>
              </DockTools>
            </DockPanel>
            <DockPanel title="混音器">
              <Mixer>
                <Channel>
                  <ChannelHead><label htmlFor="volume">桌面音频</label><Decibel>0.0 dB</Decibel></ChannelHead>
                  <Meter><MeterBar /><MeterBar /></Meter>
                  <svg width="100%" height="4">
                    {ticks.map((t) => (
                      <line key={t} x1={`${(t / 60) * 100}%`} x2={`${(t / 60) * 100}%`} y1="0" y2={t % 5 ? 2 : 4} stroke={t % 5 ? '#999' : '#ddd'} />
                    ))}
                  </svg>
                  <MeterLabels>{levels.map((l) => <span key={l}>{l}</span>)}</MeterLabels>
                  <VolumeRow>
                    <VolumeSlider id="volume" type="range" min={0} max={100} defaultValue={100} />
                    <IconButton aria-label="静音"><Speaker /></IconButton>
                    <IconButton aria-label="音频设置"><Gear /></IconButton>
                  </VolumeRow>
                </Channel>
                <ScrollThumb />
              </Mixer>
            </DockPanel>
            <DockPanel title="转场特效">
              <Transitions>
                <FieldRow>
                  <SelectWrap>
                    <Select aria-label="转场特效"><option>渐变</option></Select>
                    <SelectArrows><Stroke d="m1 4 3-3 3 3M1 9l3 3 3-3" w={8} h={13} sw={1} /></SelectArrows>
                  </SelectWrap>
                  <SideButton aria-label="转场属性"><Gear /></SideButton>
                </FieldRow>
                <FieldRow>
                  <label htmlFor="duration">时长</label>
                  <Spin>
                    <SpinInput id="duration" defaultValue="300 ms" />
                    <SpinButtons>
                      <SpinButton aria-label="增加"><Stroke d="m1 6 5-5 5 5" w={12} h={7} /></SpinButton>
                      <SpinButton aria-label="减少"><Stroke d="m1 1 5 5 5-5" w={12} h={7} /></SpinButton>
                    </SpinButtons>
                  </Spin>
                </FieldRow>
              </Transitions>
            </DockPanel>
            <DockPanel title="控件">
              <Controls>
                {controls.map((b, i) => <ControlButton key={b} $marked={i === 0}>{b}</ControlButton>)}
              </Controls>
            </DockPanel>
          </Docks>
          <StatusBar>
            <StatusItem $gap={5} $end={11}><Broadcast />LIVE: 00:00:00</StatusItem>
            <StatusItem $gap={10} $end={26}><RecDot />REC: 00:00:00</StatusItem>
            <span>CPU: 2.3%, 30.00 fps</span>
            <Watermark $right={15} $bottom={15} $size={18} $color="rgba(170, 170, 170, 0.7)">@稀土掘金技术社区</Watermark>
            <Watermark $right={7} $bottom={2} $size={19} $color="rgba(215, 215, 215, 0.85)">CSDN @加班猿</Watermark>
          </StatusBar>
        </Window>
        <RightEdge>
          <EdgeText $h={58}>ル</EdgeText>
          <EdgeText $h={34}>g</EdgeText>
          <EdgeText $h={146} />
          <EdgeText $h={34}>装</EdgeText>
          <EdgeText $h={36}>x</EdgeText>
          <EdgeText $h={34}>gi</EdgeText>
          <EdgeText $h={38}>置</EdgeText>
          <EdgeText $h={36}>gi</EdgeText>
          <Slice $h={22} $bg="#d2d4d6" />
          <Slice $h={30} $bg="#eee" />
          <Slice $h={2} $bg="#888" />
          <Slice $h={12} $bg="#f2f2f2" />
          <Slice $h={22} $bg="linear-gradient(135deg, #fff 20%, #e86a20 40%, #f6e0d0 60%)" />
          <Slice $h={25} $bg="linear-gradient(135deg, #c9a46a, #35302a 60%)" />
          <EdgeText $h={36} $color="#fff" $bg="#f0680c">步</EdgeText>
          <Slice $h={3} $bg="#2a1c10" />
          <EdgeText $h={40} $color="#fff" $bg="#f0680c">是</EdgeText>
          <Sea />
        </RightEdge>
        <BottomEdge>
          <BottomFill $bg="#2e3338" />
          <BottomFill $bg="#e8e8e8" $w={32} />
          <BottomFill $bg="#0c3f5e" $w={90} />
        </BottomEdge>
      </Desktop>
    </>
  );
}
